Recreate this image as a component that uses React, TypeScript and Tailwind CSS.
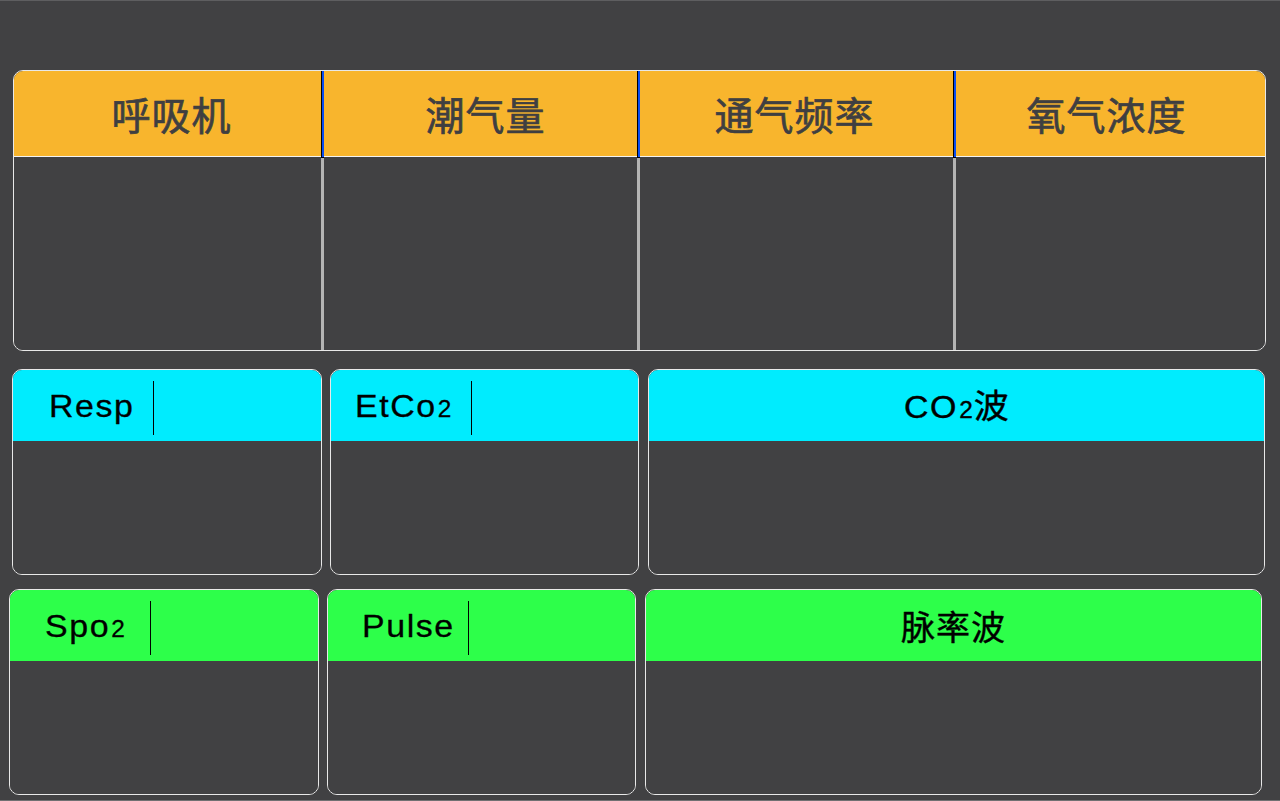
const cjk = "font-['Noto_Sans_CJK_SC','Noto_Sans',sans-serif]";
const latin = "font-['Liberation_Sans','Noto_Sans_CJK_SC',sans-serif]";

const ventHeaders = [
  { text: "呼吸机", width: "w-[307px]", nudge: "pl-[8px]" },
  { text: "潮气量", width: "w-[313px]", nudge: "pl-[10px]" },
  { text: "通气频率", width: "w-[313px]", nudge: "pr-[4px]" },
  { text: "氧气浓度", width: "flex-1", nudge: "pr-[8px]" },
];

function Sub({ children }: { children: React.ReactNode }) {
  return <span className="ml-[1px] text-[23px] tracking-[1px]">{children}</span>;
}

function LabelPanel({
  label,
  pad,
  color,
  width,
}: {
  label: React.ReactNode;
  pad: string;
  color: string;
  width: string;
}) {
  return (
    <div className={`flex h-[206px] ${width} shrink-0 flex-col overflow-hidden rounded-[10px] border border-[#e8e8e8]`}>
      <div className={`flex h-[71px] shrink-0 items-start ${color}`}>
        <div
          className={`flex h-full w-[140px] items-center ${pad} ${latin} text-[32px] tracking-[1.5px] text-black [-webkit-text-stroke:0.3px_#000]`}
        >
          <span className="inline-block origin-left scale-x-[1.06]">{label}</span>
        </div>
        <div className="mt-[11px] h-[54px] w-px bg-black" />
      </div>
      <div className="flex-1 bg-[#414143]" />
    </div>
  );
}

function WavePanel({
  title,
  color,
  latinTitle,
}: {
  title: React.ReactNode;
  color: string;
  latinTitle?: boolean;
}) {
  return (
    <div className="flex h-[206px] w-[617px] shrink-0 flex-col overflow-hidden rounded-[10px] border border-[#e8e8e8]">
      <div
        className={`flex h-[71px] shrink-0 items-center justify-center ${color} text-black [-webkit-text-stroke:0.4px_#000] ${
          latinTitle ? `${latin} text-[32px] tracking-[1.5px]` : `${cjk} text-[34px] font-normal tracking-[1px]`
        }`}
      >
        {title}
      </div>
      <div className="flex-1 bg-[#414143]" />
    </div>
  );
}

export default function App() {
  return (
    <div className="flex h-[801px] w-[1280px] flex-col border-t border-b border-t-[#5e5e60] border-b-[#707072] bg-[#414143]">
      {/* ventilator table */}
      <div className="ml-[13px] mt-[69px] flex h-[281px] w-[1253px] overflow-hidden rounded-[10px] border border-[#e8e8e8]">
        {ventHeaders.map((h, i) => (
          <div key={h.text} className={`flex ${i === 3 ? "flex-1" : ""}`}>
            {i > 0 && (
              <div className="flex w-[3px] shrink-0 flex-col">
                <div className="h-[86px] border-l border-black bg-[#0a4df2]" />
                <div className="flex-1 border-t border-black bg-[#b4b4b4]" />
              </div>
            )}
            <div className={`flex ${h.width} flex-col`}>
              <div
                className={`flex h-[86px] items-center justify-center ${h.nudge} border-b border-[#f4f4f4] bg-[#f8b52d] ${cjk} text-[39px] font-normal tracking-[1px] text-[#3f3f41] [-webkit-text-stroke:0.7px_#3f3f41]`}
              >
                {h.text}
              </div>
              <div className="flex-1 bg-[#414143]" />
            </div>
          </div>
        ))}
      </div>

      {/* capnography row */}
      <div className="ml-[12px] mt-[18px] flex">
        <LabelPanel label="Resp" pad="pl-[36px]" color="bg-[#00ecfe]" width="w-[310px]" />
        <div className="w-[8px] shrink-0" />
        <LabelPanel
          label={
            <>
              EtCo<Sub>2</Sub>
            </>
          }
          pad="pl-[24px]"
          color="bg-[#00ecfe]"
          width="w-[309px]"
        />
        <div className="w-[9px] shrink-0" />
        <WavePanel
          latinTitle
          color="bg-[#00ecfe]"
          title={
            <span className="inline-block scale-x-[1.06]">
              CO<Sub>2</Sub>
              <span className={`${cjk} text-[33px] font-normal tracking-normal`}>波</span>
            </span>
          }
        />
      </div>

      {/* pulse oximetry row */}
      <div className="ml-[9px] mt-[14px] flex">
        <LabelPanel
          label={
            <>
              Spo<Sub>2</Sub>
            </>
          }
          pad="pl-[35px]"
          color="bg-[#2dff4a]"
          width="w-[310px]"
        />
        <div className="w-[8px] shrink-0" />
        <LabelPanel label="Pulse" pad="pl-[34px]" color="bg-[#2dff4a]" width="w-[309px]" />
        <div className="w-[9px] shrink-0" />
        <WavePanel color="bg-[#2dff4a]" title="脉率波" />
      </div>
    </div>
  );
}
